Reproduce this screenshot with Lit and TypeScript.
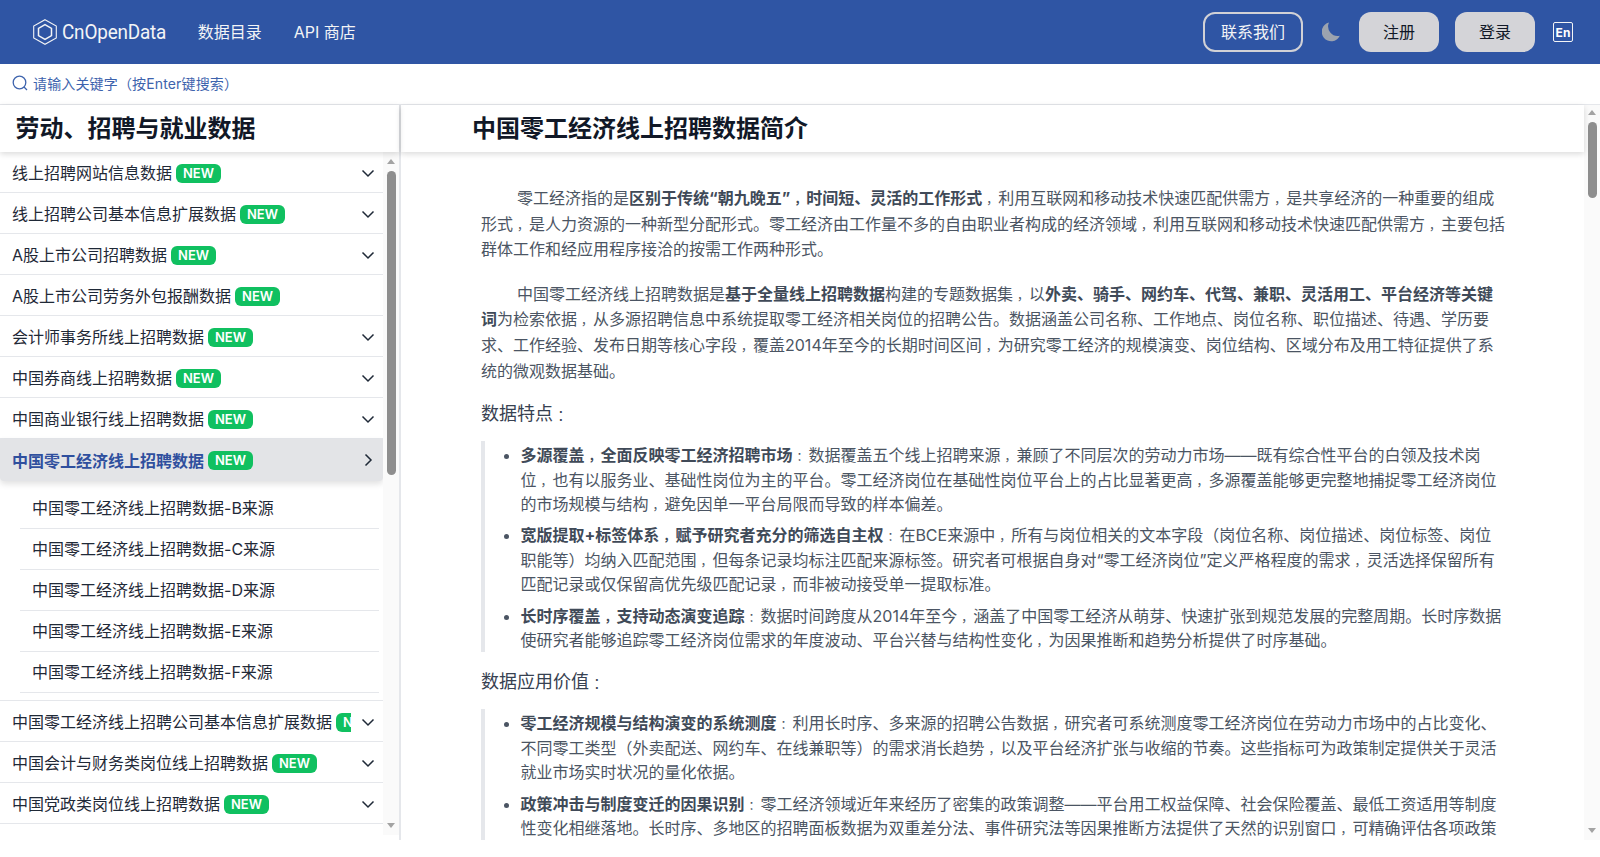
import { LitElement, html, css } from "lit";
import { customElement } from "lit/decorators.js";

const chevDown = html`<svg class="chev" viewBox="0 0 24 24" width="24" height="24" fill="none" stroke="#1f2937" stroke-width="1.5"><path d="M6.500 9.500l5.500 5.500 5.500-5.500"/></svg>`;
const chevRight = html`<svg class="chev" viewBox="0 0 24 24" width="24" height="24" fill="none" stroke="#1f2937" stroke-width="1.5"><path d="M9.500 6.500l5.500 5.500-5.500 5.500"/></svg>`;

const before = [
  ["线上招聘网站信息数据", true],
  ["线上招聘公司基本信息扩展数据", true],
  ["A股上市公司招聘数据", true],
  ["A股上市公司劳务外包报酬数据", false],
  ["会计师事务所线上招聘数据", true],
  ["中国券商线上招聘数据", true],
  ["中国商业银行线上招聘数据", true],
] as [string, boolean][];
const subs = ["B", "C", "D", "E", "F"];
const after = ["中国零工经济线上招聘公司基本信息扩展数据", "中国会计与财务类岗位线上招聘数据", "中国党政类岗位线上招聘数据"];

const punct = (s: string) =>
  s.split(/([，：])/).map((p) => (p === "，" || p === "：" ? html`<span class="pc">${p}</span>` : p));
const fmt = (s: string) =>
  s.split("**").map((p, i) => (i % 2 ? html`<b>${punct(p)}</b>` : punct(p)));

const para = [
  "零工经济指的是**区别于传统“朝九晚五”，时间短、灵活的工作形式**，利用互联网和移动技术快速匹配供需方，是共享经济的一种重要的组成形式，是人力资源的一种新型分配形式。零工经济由工作量不多的自由职业者构成的经济领域，利用互联网和移动技术快速匹配供需方，主要包括群体工作和经应用程序接洽的按需工作两种形式。",
  "中国零工经济线上招聘数据是**基于全量线上招聘数据**构建的专题数据集，以**外卖、骑手、网约车、代驾、兼职、灵活用工、平台经济等关键词**为检索依据，从多源招聘信息中系统提取零工经济相关岗位的招聘公告。数据涵盖公司名称、工作地点、岗位名称、职位描述、待遇、学历要求、工作经验、发布日期等核心字段，覆盖2014年至今的长期时间区间，为研究零工经济的规模演变、岗位结构、区域分布及用工特征提供了系统的微观数据基础。",
];
const features = [
  "**多源覆盖，全面反映零工经济招聘市场**：数据覆盖五个线上招聘来源，兼顾了不同层次的劳动力市场——既有综合性平台的白领及技术岗位，也有以服务业、基础性岗位为主的平台。零工经济岗位在基础性岗位平台上的占比显著更高，多源覆盖能够更完整地捕捉零工经济岗位的市场规模与结构，避免因单一平台局限而导致的样本偏差。",
  "**宽版提取+标签体系，赋予研究者充分的筛选自主权**：在BCE来源中，所有与岗位相关的文本字段（岗位名称、岗位描述、岗位标签、岗位职能等）均纳入匹配范围，但每条记录均标注匹配来源标签。研究者可根据自身对“零工经济岗位”定义严格程度的需求，灵活选择保留所有匹配记录或仅保留高优先级匹配记录，而非被动接受单一提取标准。",
  "**长时序覆盖，支持动态演变追踪**：数据时间跨度从2014年至今，涵盖了中国零工经济从萌芽、快速扩张到规范发展的完整周期。长时序数据使研究者能够追踪零工经济岗位需求的年度波动、平台兴替与结构性变化，为因果推断和趋势分析提供了时序基础。",
];
const values = [
  "**零工经济规模与结构演变的系统测度**：利用长时序、多来源的招聘公告数据，研究者可系统测度零工经济岗位在劳动力市场中的占比变化、不同零工类型（外卖配送、网约车、在线兼职等）的需求消长趋势，以及平台经济扩张与收缩的节奏。这些指标可为政策制定提供关于灵活就业市场实时状况的量化依据。",
  "**政策冲击与制度变迁的因果识别**：零工经济领域近年来经历了密集的政策调整——平台用工权益保障、社会保险覆盖、最低工资适用等制度性变化相继落地。长时序、多地区的招聘面板数据为双重差分法、事件研究法等因果推断方法提供了天然的识别窗口，可精确评估各项政策",
];

@customElement("app-root")
export class AppRoot extends LitElement {
  static styles = css`
    :host { display: block; height: 840px; overflow: hidden; font-family: Inter, "Noto Sans CJK SC", sans-serif; color: #1f2937; background: #fff; }
    * { box-sizing: border-box; }
    .nav { height: 64px; background: #2f55a4; display: flex; align-items: center; padding: 0 27px 0 33px; color: #fff; }
    .logo { display: flex; align-items: center; gap: 5px; }
    .brand { display: inline-block; font-family: Roboto, sans-serif; font-size: 21px; color: #f3f4f6; transform-origin: left; transform: scaleX(.9); margin-right: -12px; letter-spacing: -0.2px; }
    .navlink { font-size: 16px; color: #f3f4f6; margin-left: 32px; padding-bottom: 2px; }
    .spacer { flex: 1; }
    .contact { width: 100px; height: 40px; border: 2px solid #d1d1d6; border-radius: 12px; display: flex; align-items: center; justify-content: center; font-size: 16px; color: #f3f4f6; padding-bottom: 2px; }
    .moon { margin: 0 19px; display: flex; width: 18px; }
    .btn { width: 80px; height: 40px; border-radius: 12px; background: #d4d4d8; color: #111827; display: flex; align-items: center; justify-content: center; font-size: 16px; padding-bottom: 2px; }
    .btn + .btn { margin-left: 16px; }
    .en { margin-left: 18px; width: 20px; height: 20px; border: 1.5px solid #f3f4f6; border-radius: 2px; font-size: 12px; font-weight: 700; display: flex; align-items: center; justify-content: center; }
    .search { height: 40px; display: flex; align-items: center; padding: 0 0 2px 12px; gap: 5px; color: #3d63ad; font-size: 14px; letter-spacing: .15px; }
    .main { display: flex; height: 736px; border-top: 1px solid #e5e7eb; }
    .side { width: 401px; flex: none; border-right: 2px solid #e5e7eb; display: flex; flex-direction: column; }
    .side h2 { margin: 0; height: 47px; flex: none; padding-left: 15.500px; font-size: 24px; line-height: 47px; font-weight: 700; color: #111827; box-shadow: 0 2px 6px rgba(0,0,0,.15); position: relative; z-index: 2; }
    .sideBody { display: flex; height: 683px; }
    .list { width: 384px; overflow: hidden; }
    .item { height: 41px; display: flex; align-items: center; border-bottom: 1px solid #e5e7eb; padding-left: 12px; font-size: 16px; color: #1f2937; }
    .item .lab { width: 339px; flex: none; display: flex; align-items: center; gap: 4px; overflow: hidden; white-space: nowrap; }
    .chev { flex: none; margin: 1px 0 0 5px; }
    .badge { flex: none; height: 19px; width: 45px; border-radius: 6px; background: #10c060; color: #fff; font-size: 13px; font-weight: 600; line-height: 19px; text-align: center; margin-top: 2px; }
    .active { background: #e3e4e7; border-bottom: none; font-weight: 700; color: #2f4f9e; box-shadow: 0 3px 6px rgba(0,0,0,.12); border-radius: 0 0 4px 4px; position: relative; height: 42px; padding-bottom: 1px; }
    .subs { padding: 7px 4px 7px 20px; border-bottom: 1px solid #e5e7eb; }
    .sub { height: 41px; display: flex; align-items: center; border-bottom: 1px solid #e5e7eb; padding: 0 0 2px 12px; font-size: 16px; color: #1f2937; }
    .track { width: 16px; flex: none; background: #fafafa; display: flex; flex-direction: column; align-items: center; position: relative; }
    .up { width: 0; height: 0; flex: none; border: 4.5px solid transparent; border-top: none; border-bottom: 5px solid #a3a3a3; }
    .down { width: 0; height: 0; flex: none; border: 4.5px solid transparent; border-bottom: none; border-top: 5px solid #a3a3a3; }
    .thumb { width: 9px; flex: none; background: #8e8e8e; border-radius: 5px; margin-top: 7px; }
    .side .up { margin-top: 7px; }
    .side .thumb { height: 304px; }
    .side .down { margin-top: auto; margin-bottom: 7px; }
    .content { flex: 1; min-width: 0; display: flex; flex-direction: column; }
    .content h1 { margin: 0; height: 47px; flex: none; padding-left: 71px; font-size: 24px; line-height: 47px; font-weight: 700; color: #111827; box-shadow: 0 2px 6px rgba(0,0,0,.15); position: relative; z-index: 2; }
    .article { flex: 1; overflow: hidden; padding: 34px 78px 0 80px; font-size: 16px; line-height: 25.6px; color: #4b5563; }
    .article p { margin: 0 0 19px; text-indent: 36px; }
    .article p + h3 { margin-top: -2px; }
    .article b { font-weight: 700; color: #404a58; }
    .pc { font-size: .75em; padding-left: .333em; line-height: 0; }
    .article h3 { margin: 0 0 14px; font-size: 18px; line-height: 26px; font-weight: 400; color: #374151; }
    .article blockquote { margin: 0 0 17px; border-left: 4px solid #e5e7eb; padding: 2px 0 0 35.500px; line-height: 24.4px; }
    .article ul { margin: 0; padding: 0; list-style: disc; }
    .article li { margin: 0 0 7px; }
    .article li:last-child { margin-bottom: 0; }
    .vbar { width: 16px; flex: none; background: #fafafa; display: flex; flex-direction: column; align-items: center; }
    .vbar .up { margin-top: 5px; }
    .vbar .thumb { height: 76px; }
    .vbar .down { margin-top: auto; margin-bottom: 7px; }
  `;

  render() {
    return html`
      <header class="nav">
        <div class="logo">
          <svg width="24" height="26" viewBox="0 0 24 26" fill="none" stroke="#f3f4f6"><path stroke-width="1.1" d="M12 .7l11.300 6.300v12L12 25.300.7 19V7z"/><path stroke-width="1.500" d="M12 5.700l6.500 3.700v7.200L12 20.300l-6.500-3.700V9.400z"/></svg>
          <span class="brand">CnOpenData</span>
        </div>
        <span class="navlink">数据目录</span>
        <span class="navlink">API 商店</span>
        <div class="spacer"></div>
        <div class="contact">联系我们</div>
        <div class="moon"><svg width="18" height="20" viewBox="0 0 18 20"><path fill="#9ca3af" d="M7 .5a9.500 9.500 0 1 0 10.800 13.300A9.600 9.600 0 0 1 7 .5z"/></svg></div>
        <div class="btn">注册</div>
        <div class="btn">登录</div>
        <div class="en">En</div>
      </header>
      <div class="search">
        <svg width="16" height="16" viewBox="0 0 16 16" fill="none" stroke="#3d63ad" stroke-width="1.300"><circle cx="7.500" cy="7.500" r="6.300"/><path d="M12 12l3 3"/></svg>
        <span>请输入关键字（按Enter键搜索）</span>
      </div>
      <div class="main">
        <aside class="side">
          <h2>劳动、招聘与就业数据</h2>
          <div class="sideBody">
            <div class="list">
              ${before.map(([t, c]) => html`<div class="item"><div class="lab">${t}<span class="badge">NEW</span></div>${c ? chevDown : ""}</div>`)}
              <div class="item active"><div class="lab">中国零工经济线上招聘数据<span class="badge">NEW</span></div>${chevRight}</div>
              <div class="subs">${subs.map((s) => html`<div class="sub">中国零工经济线上招聘数据-${s}来源</div>`)}</div>
              ${after.map((t) => html`<div class="item"><div class="lab">${t}<span class="badge">NEW</span></div>${chevDown}</div>`)}
            </div>
            <div class="track"><div class="up"></div><div class="thumb"></div><div class="down"></div></div>
          </div>
        </aside>
        <section class="content">
          <h1>中国零工经济线上招聘数据简介</h1>
          <div class="article">
            ${para.map((p) => html`<p>${fmt(p)}</p>`)}
            <h3>${fmt("数据特点：")}</h3>
            <blockquote><ul>${features.map((t) => html`<li>${fmt(t)}</li>`)}</ul></blockquote>
            <h3>${fmt("数据应用价值：")}</h3>
            <blockquote><ul>${values.map((t) => html`<li>${fmt(t)}</li>`)}</ul></blockquote>
          </div>
        </section>
        <div class="vbar"><div class="up"></div><div class="thumb"></div><div class="down"></div></div>
      </div>
    `;
  }
}
